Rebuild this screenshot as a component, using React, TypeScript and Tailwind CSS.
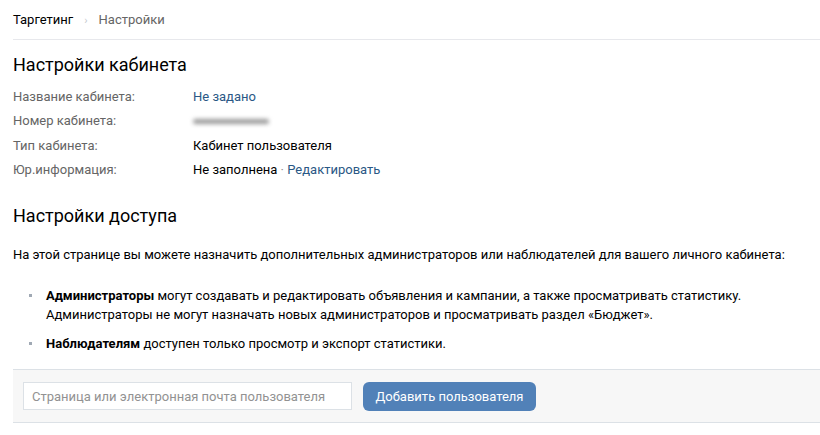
import React from "react";

export default function App() {
  const f = { fontFamily: "Roboto, 'Open Sans', Arial, sans-serif" };
  return (
    <div className="w-[820px] h-[435px] bg-white text-[13px] text-black overflow-hidden" style={f}>
      <div className="pl-[13px]">
        <div className="h-[39px] flex items-center text-[13px]">
          <span className="text-[#000]">Таргетинг</span>
          <span className="mx-[11px] text-[#c5c9cf] text-[11px] mt-[3px]">›</span>
          <span className="text-[#656565]">Настройки</span>
        </div>
        <div className="h-px bg-[#e7e8ec]" />
        <div className="pt-[13px]">
          <h2 className="text-[18px] leading-[23px] text-black font-normal">Настройки кабинета</h2>
          <div className="mt-[8px] flex flex-col">
            <div className="flex h-[24.6px] items-center">
              <div className="w-[180px] text-[#656565]">Название кабинета:</div>
              <div className="text-[#2a5885]">Не задано</div>
            </div>
            <div className="flex h-[24.6px] items-center">
              <div className="w-[180px] text-[#656565]">Номер кабинета:</div>
              <div className="w-[76px] h-[5px] rounded-full bg-[#9a9a9a] blur-[2px] mt-[1px]" />
            </div>
            <div className="flex h-[24.6px] items-center">
              <div className="w-[180px] text-[#656565]">Тип кабинета:</div>
              <div>Кабинет пользователя</div>
            </div>
            <div className="flex h-[24.6px] items-center">
              <div className="w-[180px] text-[#656565]">Юр.информация:</div>
              <div>
                Не заполнена <span className="text-[#939393]">·</span>{" "}
                <span className="text-[#2a5885]">Редактировать</span>
              </div>
            </div>
          </div>
          <h2 className="mt-[22px] text-[18px] leading-[23px] text-black font-normal">Настройки доступа</h2>
          <p className="mt-[19px] leading-[18px]">
            На этой странице вы можете назначить дополнительных администраторов или наблюдателей для вашего личного кабинета:
          </p>
          <ul className="mt-[22px] pl-[16px]">
            <li className="flex">
              <span className="w-[3px] h-[3px] bg-[#a0a9b4] mt-[8px] shrink-0" />
              <div className="pl-[14px] leading-[19px]">
                <b className="font-bold">Администраторы</b> могут создавать и редактировать объявления и кампании, а также просматривать статистику.
                <br />
                Администраторы не могут назначать новых администраторов и просматривать раздел «Бюджет».
              </div>
            </li>
            <li className="flex mt-[10px]">
              <span className="w-[3px] h-[3px] bg-[#a0a9b4] mt-[8px] shrink-0" />
              <div className="pl-[14px] leading-[19px]">
                <b className="font-bold">Наблюдателям</b> доступен только просмотр и экспорт статистики.
              </div>
            </li>
          </ul>
        </div>
        <div className="mt-[16px] border-t border-b border-[#dce1e6] bg-[#f7f7f7] h-[54px] flex items-center pl-[10px] gap-[11px]">
          <div className="w-[329px] h-[28px] bg-white border border-[#dce1e6] flex items-center pl-[8px] text-[#929292]">
            Страница или электронная почта пользователя
          </div>
          <button className="w-[173px] h-[29px] rounded-[6px] bg-[#5181b8] text-white text-[13px]">
            Добавить пользователя
          </button>
        </div>
      </div>
    </div>
  );
}
